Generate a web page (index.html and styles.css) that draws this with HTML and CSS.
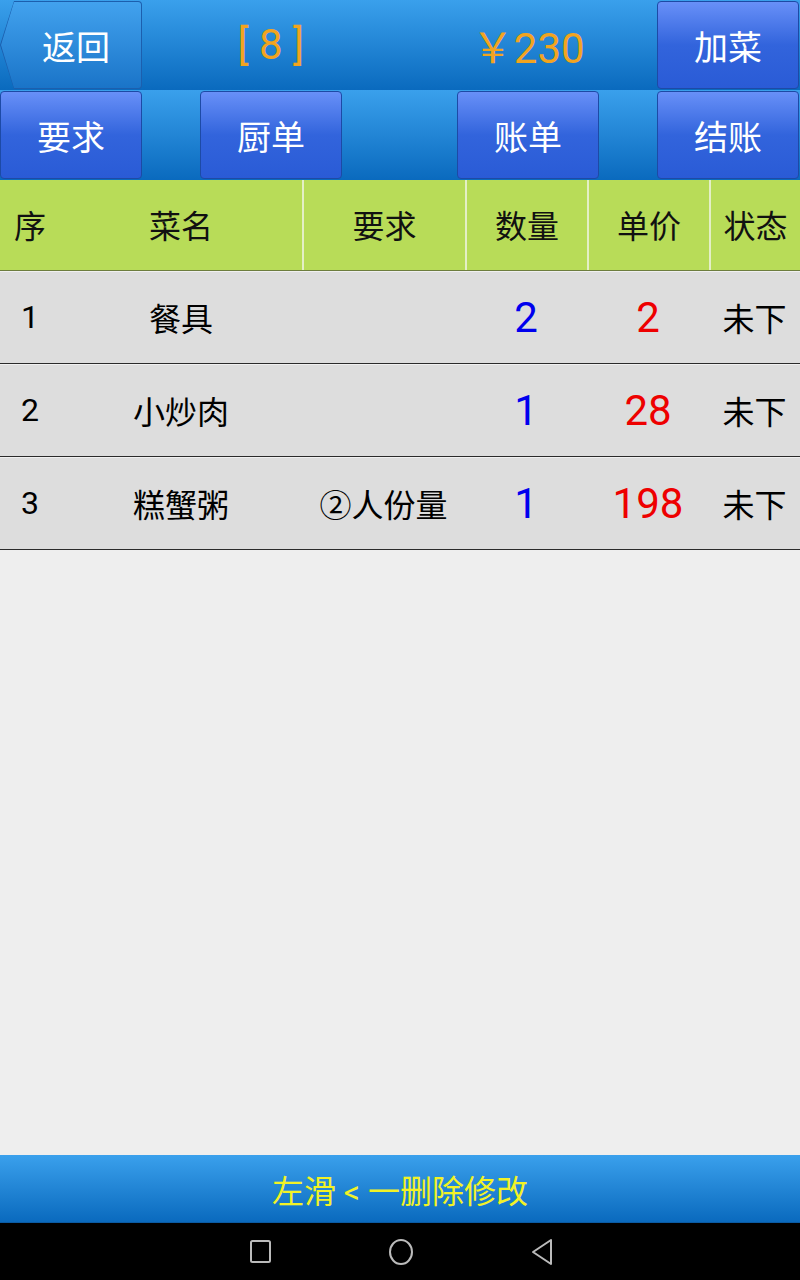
FILE: index.html
```html
<!DOCTYPE html>
<html lang="zh">
<head>
<meta charset="utf-8">
<link rel="stylesheet" href="styles.css">
</head>
<body>
<div class="screen">
  <div class="bar top">
    <div class="back-outer"><div class="back-inner">返回</div></div>
    <div class="info">[ 8 ]</div>
    <div class="info">￥230</div>
    <div class="btn">加菜</div>
  </div>
  <div class="bar tools">
    <div class="btn c1">要求</div>
    <div class="btn c3">厨单</div>
    <div class="btn c5">账单</div>
    <div class="btn c7">结账</div>
  </div>
  <div class="table-head">
    <div class="cell">序</div>
    <div class="cell">菜名</div>
    <div class="cell sep">要求</div>
    <div class="cell sep">数量</div>
    <div class="cell sep">单价</div>
    <div class="cell sep">状态</div>
  </div>
  <div class="row">
    <div class="cell">1</div>
    <div class="cell">餐具</div>
    <div class="cell"></div>
    <div class="cell num qty">2</div>
    <div class="cell num price">2</div>
    <div class="cell">未下</div>
  </div>
  <div class="row">
    <div class="cell">2</div>
    <div class="cell">小炒肉</div>
    <div class="cell"></div>
    <div class="cell num qty">1</div>
    <div class="cell num price">28</div>
    <div class="cell">未下</div>
  </div>
  <div class="row">
    <div class="cell">3</div>
    <div class="cell">糕蟹粥</div>
    <div class="cell">②人份量</div>
    <div class="cell num qty">1</div>
    <div class="cell num price">198</div>
    <div class="cell">未下</div>
  </div>
  <div class="empty"></div>
  <div class="footer">左滑 &lt; 一删除修改</div>
  <div class="nav">
    <svg class="ico-square" width="24" height="26" viewBox="0 0 24 26"><rect x="2" y="2" width="19" height="21" rx="1.5" fill="none" stroke="#bbb" stroke-width="2"/></svg>
    <svg width="28" height="28" viewBox="0 0 28 28"><ellipse cx="14" cy="14" rx="11" ry="12" fill="none" stroke="#bbb" stroke-width="2"/></svg>
    <svg width="26" height="28" viewBox="0 0 26 28"><path d="M22 2 L4 14 L22 26 Z" fill="none" stroke="#bbb" stroke-width="2" stroke-linejoin="round"/></svg>
  </div>
</div>
</body>
</html>
```
FILE: styles.css
```css
html, body {
  margin: 0;
  padding: 0;
}
body {
  font-family: Roboto, "Noto Sans CJK SC", sans-serif;
  background: #eeeeee;
}
.screen {
  width: 800px;
  height: 1280px;
  display: flex;
  flex-direction: column;
  overflow: hidden;
}
.bar {
  height: 90px;
  background: linear-gradient(#3aa0ec, #0a6abe);
  box-sizing: border-box;
  padding: 1px 1px 1px 0;
  display: grid;
}
.top {
  grid-template-columns: 142px 1fr 1fr 142px;
}
.tools {
  grid-template-columns: 142px 58px 142px 1fr 142px 58px 142px;
}
.c1 { grid-column: 1; }
.c3 { grid-column: 3; }
.c5 { grid-column: 5; }
.c7 { grid-column: 7; }
.btn {
  box-sizing: border-box;
  border: 1px solid #1d4aa6;
  border-radius: 4px;
  background: linear-gradient(#6890f8, #3264dc 50%, #2a5bd6);
  color: #fff;
  font-size: 34px;
  display: flex;
  align-items: center;
  justify-content: center;
}
.back-outer {
  background: #1c5fae;
  clip-path: polygon(14px 0, 100% 0, 100% 100%, 14px 100%, 0 50%);
  padding: 1px;
  border-radius: 4px;
  display: flex;
}
.back-inner {
  flex: 1;
  background: linear-gradient(#42a2ee, #1a74c8);
  clip-path: polygon(13px 0, 100% 0, 100% 100%, 13px 100%, 0 50%);
  border-radius: 3px;
  color: #fff;
  font-size: 34px;
  display: flex;
  align-items: center;
  justify-content: center;
  padding-left: 10px;
}
.info {
  color: #f2a420;
  font-size: 42px;
  display: flex;
  align-items: center;
  justify-content: center;
  white-space: pre;
  padding-bottom: 2px;
}
.table-head, .row {
  display: grid;
  grid-template-columns: 60px 242px 163px 122px 122px 91px;
}
.table-head {
  height: 90px;
  background: #b8dc58;
  border-bottom: 1px solid #6d7d3e;
  font-size: 32px;
  color: #111;
}
.cell {
  display: flex;
  align-items: center;
  justify-content: center;
}
.table-head .cell {
  padding-bottom: 3px;
}
.sep {
  border-left: 2px solid #e4efc6;
}
.row {
  height: 91px;
  background: #dddddd;
  border-bottom: 1px solid #2a2a2a;
  border-top: 1px solid #f0f0f0;
  font-size: 32px;
  color: #000;
}
.row .cell {
  padding-bottom: 2px;
}
.row .num {
  font-size: 42px;
  padding-bottom: 0;
}
.qty { color: #0000ee; }
.price { color: #ee0000; }
.empty {
  flex: 1;
  background: #eeeeee;
}
.footer {
  height: 67px;
  background: linear-gradient(#3aa0ec, #0a6abe);
  border-bottom: 1px solid #0b5ba3;
  color: #f2f226;
  font-size: 32px;
  display: flex;
  align-items: center;
  justify-content: center;
}
.nav {
  height: 57px;
  background: #000;
  display: flex;
  align-items: center;
  justify-content: center;
  gap: 114px;
}
.ico-square {
  margin-left: 4px;
}
```
